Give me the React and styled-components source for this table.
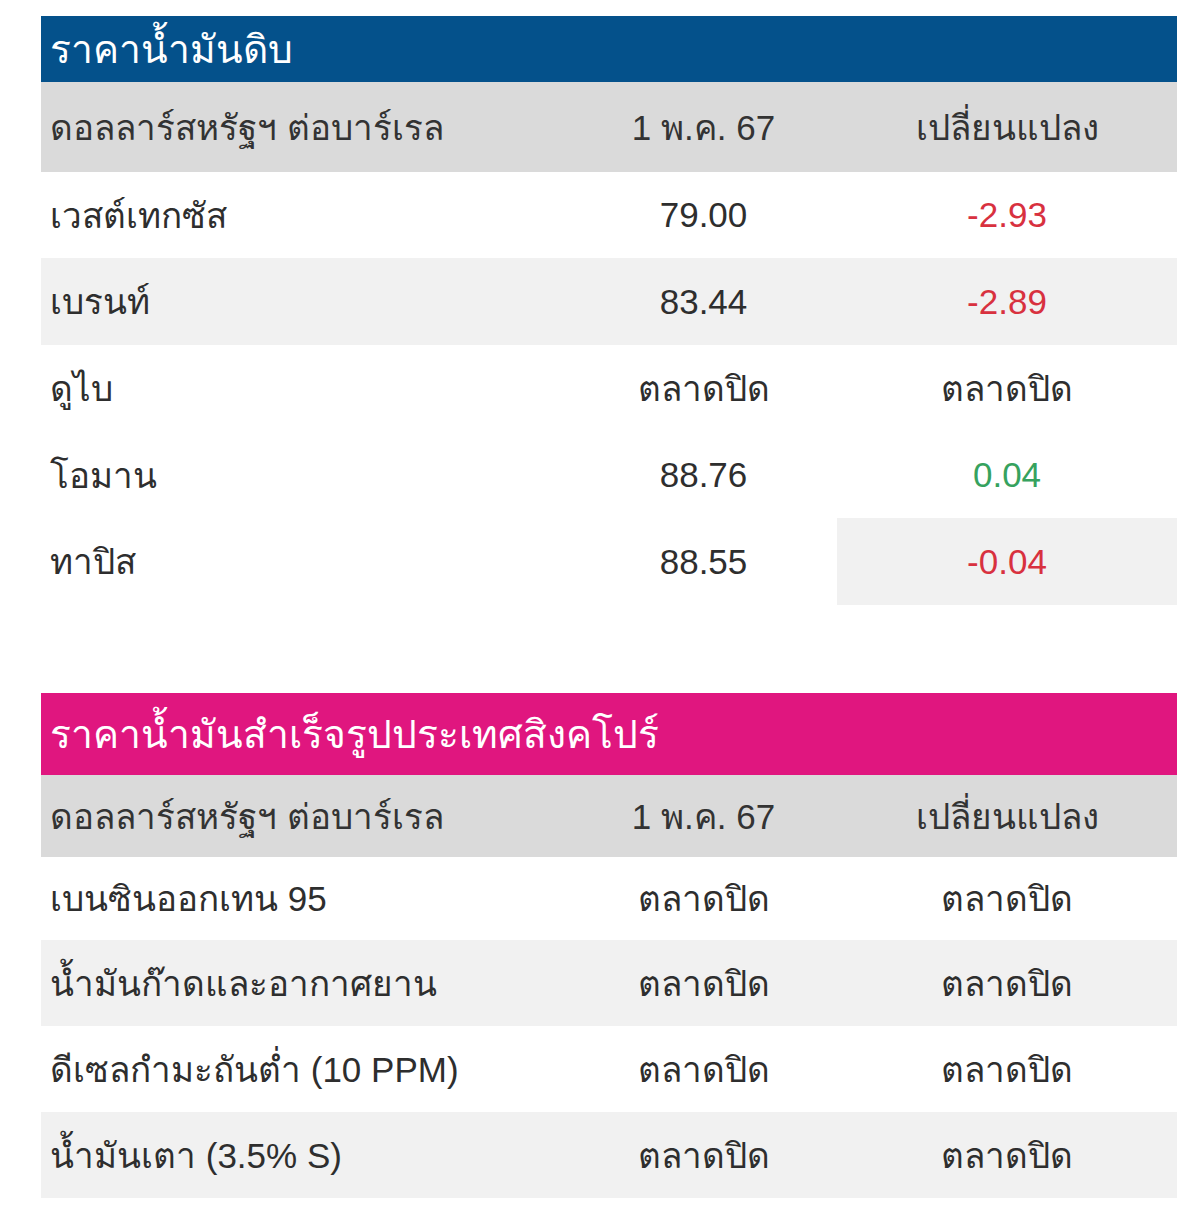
import styled, { createGlobalStyle } from "styled-components";

const GlobalStyle = createGlobalStyle`
  body {
    margin: 0;
    background: #ffffff;
    font-family: "Liberation Sans", Arial, "Noto Sans", sans-serif;
  }
`;

const crude = [
  { name: "เวสต์เทกซัส", price: "79.00", change: "-2.93" },
  { name: "เบรนท์", price: "83.44", change: "-2.89", striped: true },
  { name: "ดูไบ", price: "ตลาดปิด", change: "ตลาดปิด" },
  { name: "โอมาน", price: "88.76", change: "0.04" },
  { name: "ทาปิส", price: "88.55", change: "-0.04", shadeLast: true },
];

const refined = [
  { name: "เบนซินออกเทน 95", price: "ตลาดปิด", change: "ตลาดปิด" },
  { name: "น้ำมันก๊าดและอากาศยาน", price: "ตลาดปิด", change: "ตลาดปิด", striped: true },
  { name: "ดีเซลกำมะถันต่ำ (10 PPM)", price: "ตลาดปิด", change: "ตลาดปิด" },
  { name: "น้ำมันเตา (3.5% S)", price: "ตลาดปิด", change: "ตลาดปิด", striped: true },
];

const toneOf = (value) => {
  if (value.startsWith("-")) return "down";
  if (/^\d/.test(value)) return "up";
  return "flat";
};

const PriceTable = ({ title, accent, titleHeight, headHeight, heights, rows }) => (
  <Table>
    <colgroup>
      <col style={{ width: 529 }} />
      <col style={{ width: 267 }} />
      <col style={{ width: 340 }} />
    </colgroup>
    <thead>
      <tr>
        <TitleCell colSpan={3} $accent={accent} $h={titleHeight}>
          {title}
        </TitleCell>
      </tr>
      <HeadRow $h={headHeight}>
        <HeadCell>ดอลลาร์สหรัฐฯ ต่อบาร์เรล</HeadCell>
        <HeadCell $center>1 พ.ค. 67</HeadCell>
        <HeadCell $center>เปลี่ยนแปลง</HeadCell>
      </HeadRow>
    </thead>
    <tbody>
      {rows.map((r, i) => (
        <Row key={r.name} $striped={r.striped} $h={heights[i]}>
          <Cell>{r.name}</Cell>
          <Cell $center>{r.price}</Cell>
          <Cell $center $tone={toneOf(r.change)} $shade={r.shadeLast}>
            {r.change}
          </Cell>
        </Row>
      ))}
    </tbody>
  </Table>
);

export default function App() {
  return (
    <>
      <GlobalStyle />
      <Page>
        <PriceTable
          title="ราคาน้ำมันดิบ"
          accent="#04518b"
          titleHeight={66}
          headHeight={90}
          heights={[86, 87, 87, 86, 87]}
          rows={crude}
        />
        <PriceTable
          title="ราคาน้ำมันสำเร็จรูปประเทศสิงคโปร์"
          accent="#e0167f"
          titleHeight={82}
          headHeight={82}
          heights={[83, 86, 86, 86]}
          rows={refined}
        />
      </Page>
    </>
  );
}

const Page = styled.div`
  display: flex;
  flex-direction: column;
  gap: 88px;
  padding: 16px 23px 16px 41px;
`;

const Table = styled.table`
  width: 1136px;
  border-collapse: collapse;
  table-layout: fixed;
  font-size: 35px;
  color: #2e2e2e;
`;

const TitleCell = styled.th`
  height: ${(p) => p.$h}px;
  padding: 0 9px;
  background: ${(p) => p.$accent};
  color: #ffffff;
  font-size: 39px;
  font-weight: normal;
  text-align: left;
  vertical-align: middle;
`;

const HeadRow = styled.tr`
  height: ${(p) => p.$h}px;
  background: #dadada;
`;

const HeadCell = styled.th`
  padding: 0 9px;
  font-weight: normal;
  color: #333333;
  text-align: ${(p) => (p.$center ? "center" : "left")};
  vertical-align: middle;
`;

const Row = styled.tr`
  height: ${(p) => p.$h}px;
  background: ${(p) => (p.$striped ? "#f1f1f1" : "#ffffff")};
`;

const Cell = styled.td`
  padding: 0 9px;
  text-align: ${(p) => (p.$center ? "center" : "left")};
  vertical-align: middle;
  background: ${(p) => (p.$shade ? "#f1f1f1" : "transparent")};
  color: ${(p) =>
    p.$tone === "down" ? "#d8313f" : p.$tone === "up" ? "#36a25e" : "#2e2e2e"};
`;
